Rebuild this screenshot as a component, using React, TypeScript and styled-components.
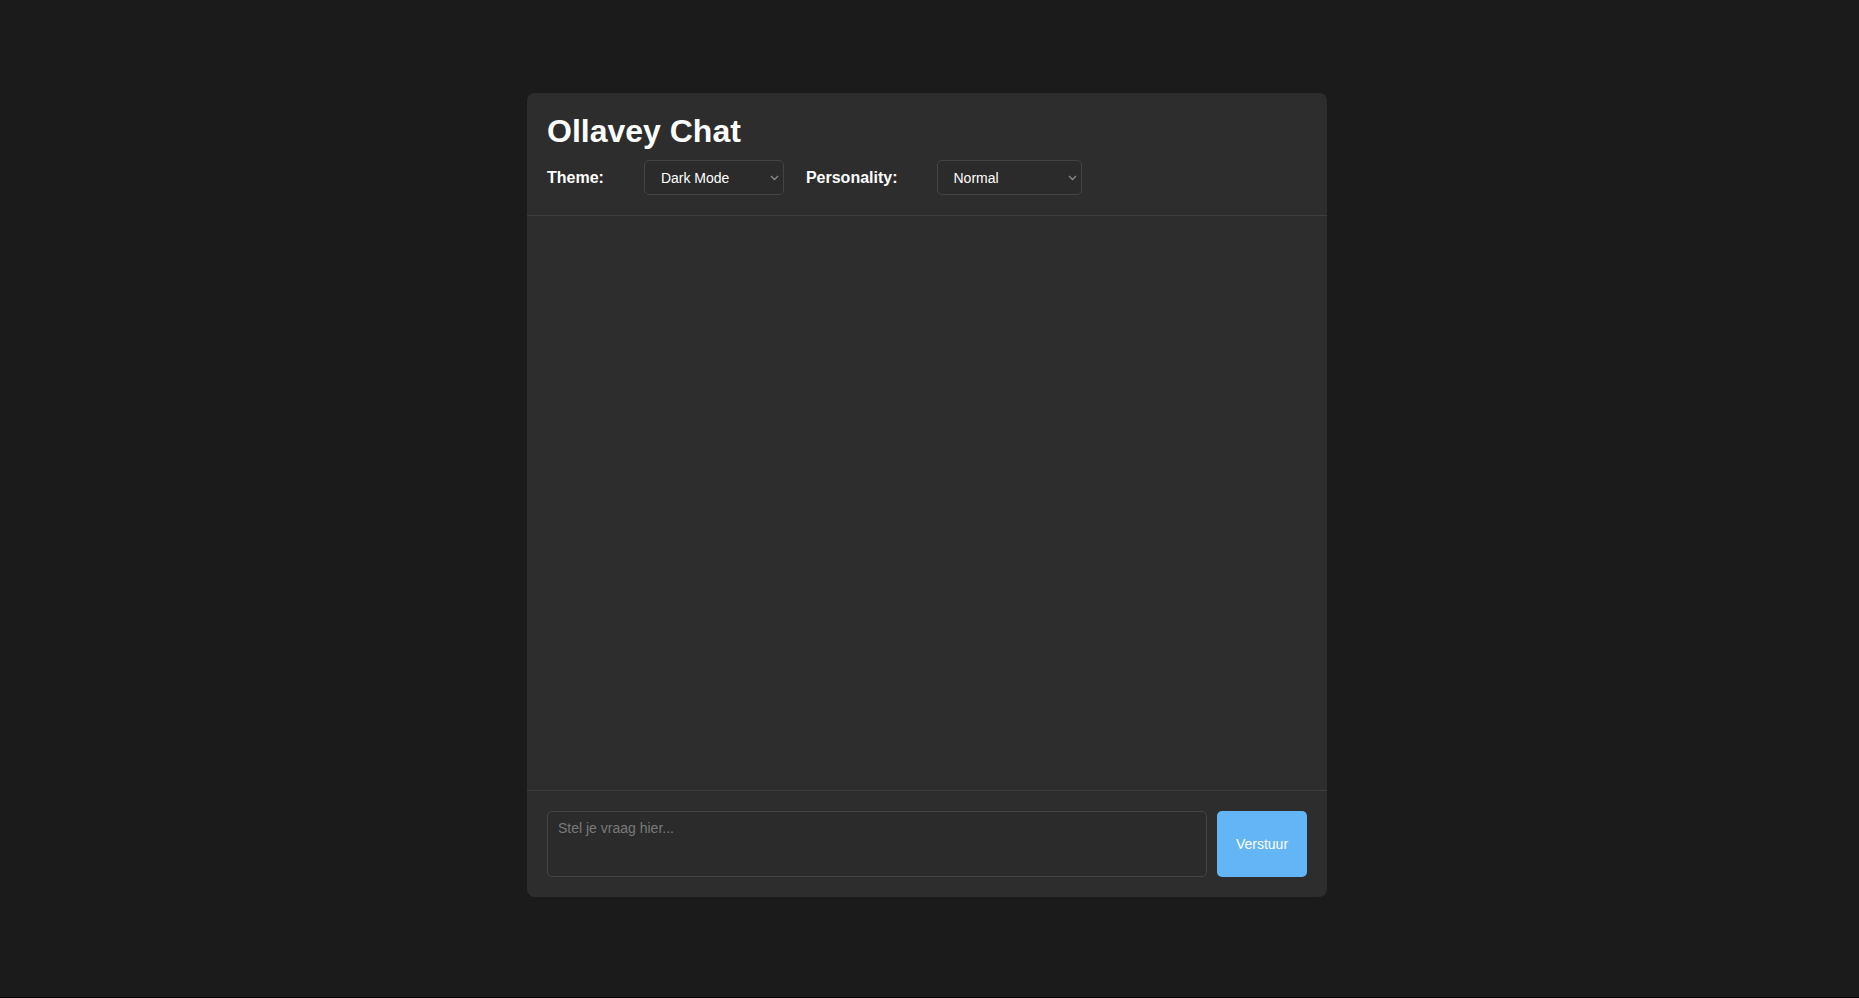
import React from "react";
import styled, { createGlobalStyle } from "styled-components";

const GlobalStyle = createGlobalStyle`
  html {
    background: #000;
  }
  body {
    margin: 0;
    height: 997px;
    background: #1b1b1b;
    color: #fff;
    font-family: "Liberation Sans", Arial, sans-serif;
  }
`;

const Page = styled.div`
  display: flex;
  justify-content: center;
  padding: 93px 5px 0 0;
`;

const Card = styled.div`
  width: 800px;
  height: 804px;
  display: flex;
  flex-direction: column;
  background: #2d2d2d;
  border-radius: 8px;
  overflow: hidden;
`;

const Header = styled.header`
  padding: 20px;
  border-bottom: 1px solid #3d3d3d;
`;

const Title = styled.h1`
  margin: 0 0 10px;
  font-size: 32px;
  font-weight: bold;
`;

const Controls = styled.div`
  display: flex;
  align-items: center;
`;

const Label = styled.label<{ $gap: number }>`
  font-size: 16px;
  font-weight: bold;
  margin-right: ${(p) => p.$gap}px;
`;

const SelectWrap = styled.div<{ $width: number }>`
  position: relative;
  width: ${(p) => p.$width}px;
  margin-right: 22px;
`;

const Select = styled.select`
  appearance: none;
  display: block;
  width: 100%;
  height: 35px;
  padding: 0 24px 0 16px;
  background: #2b2b2b;
  color: #fff;
  border: 1px solid #444;
  border-radius: 5px;
  font-family: "Liberation Sans", Arial, sans-serif;
  font-size: 14px;
  outline: none;
`;

const Chevron = styled.svg`
  position: absolute;
  right: 5px;
  top: 15px;
  width: 9px;
  height: 6px;
  pointer-events: none;
`;

const Messages = styled.div`
  flex: 1;
  overflow-y: auto;
`;

const Footer = styled.footer`
  display: flex;
  gap: 10px;
  padding: 20px;
  border-top: 1px solid #3d3d3d;
`;

const Input = styled.textarea`
  flex: 1;
  height: 66px;
  box-sizing: border-box;
  padding: 8px 10px 10px;
  background: #2b2b2b;
  color: #fff;
  border: 1px solid #444;
  border-radius: 5px;
  font-family: "Liberation Sans", Arial, sans-serif;
  font-size: 14px;
  resize: none;
  outline: none;
  &::placeholder {
    color: #7a7a7a;
  }
`;

const SendButton = styled.button`
  width: 90px;
  height: 66px;
  background: #64b5f6;
  color: #fff;
  border: none;
  border-radius: 5px;
  font-family: "Liberation Sans", Arial, sans-serif;
  font-size: 14px;
  cursor: pointer;
`;

type DropdownProps = {
  width: number;
  value: string;
  options: [string, string][];
  onChange: (v: string) => void;
};

const Dropdown = ({ width, value, options, onChange }: DropdownProps) => (
  <SelectWrap $width={width}>
    <Select value={value} onChange={(e) => onChange(e.target.value)}>
      {options.map(([v, label]) => (
        <option key={v} value={v}>
          {label}
        </option>
      ))}
    </Select>
    <Chevron viewBox="0 0 9 6">
      <path d="M1 1l3.5 3.5L8 1" fill="none" stroke="#8a8a8a" strokeWidth="1.3" />
    </Chevron>
  </SelectWrap>
);

export default function App() {
  const [theme, setTheme] = React.useState("dark");
  const [personality, setPersonality] = React.useState("normal");
  const [text, setText] = React.useState("");

  return (
    <>
      <GlobalStyle />
      <Page>
        <Card>
          <Header>
            <Title>Ollavey Chat</Title>
            <Controls>
              <Label $gap={40}>Theme:</Label>
              <Dropdown
                width={140}
                value={theme}
                onChange={setTheme}
                options={[
                  ["dark", "Dark Mode"],
                  ["light", "Light Mode"],
                ]}
              />
              <Label $gap={39}>Personality:</Label>
              <Dropdown
                width={145}
                value={personality}
                onChange={setPersonality}
                options={[
                  ["normal", "Normal"],
                  ["funny", "Grappig"],
                ]}
              />
            </Controls>
          </Header>
          <Messages />
          <Footer>
            <Input
              placeholder="Stel je vraag hier..."
              value={text}
              onChange={(e) => setText(e.target.value)}
            />
            <SendButton>Verstuur</SendButton>
          </Footer>
        </Card>
      </Page>
    </>
  );
}
